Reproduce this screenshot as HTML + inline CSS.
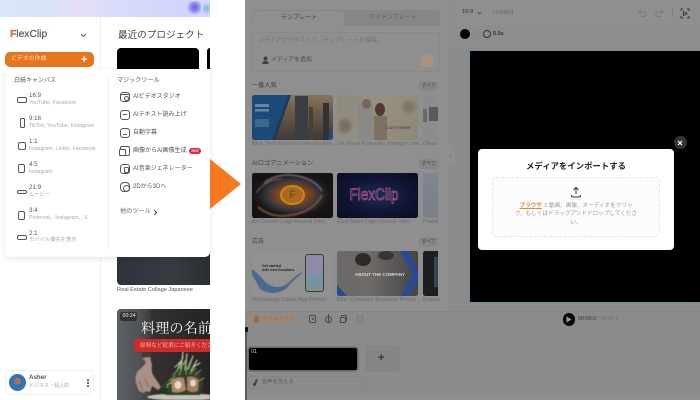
<!DOCTYPE html>
<html lang="ja"><head><meta charset="utf-8"><style>
html,body{margin:0;padding:0;width:700px;height:400px;overflow:hidden;background:#fff}
#w{position:relative;width:700px;height:400px;overflow:hidden;font-family:"Liberation Sans","Noto Sans CJK JP",sans-serif;filter:blur(.3px)}
.a{position:absolute}
.t{position:absolute;white-space:nowrap;line-height:1}
.lab{font-size:6.2px;color:#555}
.sub{font-size:5.3px;color:#aaa}
.mt{font-size:6px;color:#555;left:133px}
.r{position:absolute;border:1.2px solid #555;box-sizing:border-box;border-radius:2px}
.m{position:absolute;left:120px;width:10px;height:10px;border:1.1px solid #555;box-sizing:border-box;border-radius:3px}
.cap{font-size:5.6px;color:#6a6a6a}
.sec{font-size:6.2px;color:#3c3c3c}
.all{position:absolute;left:419px;width:19px;height:10px;border-radius:3px;background:#878787;font-size:5px;color:#444;line-height:10px;text-align:center}
.c{position:absolute;width:81px;height:45px;border-radius:2.5px;overflow:hidden}
</style></head><body><div id="w">

<!-- LEFT PANEL -->
<div class="a" style="left:0;top:0;width:210px;height:17px;background:linear-gradient(90deg,#dbe6f8 0,#d8e2f8 50px,#e6dff7 80px,#d8dbfa 120px,#d2d3fb 190px,#d2d8fa 210px)"></div>
<div class="a" style="left:187px;top:1px;width:14px;height:14px;background:radial-gradient(circle at 55% 45%,#6a62e0 0,#8f86ea 35%,rgba(210,205,250,0) 72%)"></div>
<div class="a" style="left:203px;top:1px;width:7px;height:15px;background:radial-gradient(circle,#86b4ea 0,rgba(210,215,250,0) 75%)"></div>
<div class="a" style="left:100px;top:17px;width:1px;height:383px;background:#f0f0f0"></div>

<div class="t" style="left:10px;top:30px;font-size:10.3px;color:#555;-webkit-text-stroke:.2px #555"><span style="color:#ee7a22;font-weight:700">F</span>lexClip</div>
<svg class="a" style="left:80px;top:33px" width="7" height="5" viewBox="0 0 7 5"><path d="M1 1l2.5 2.5L6 1" fill="none" stroke="#555" stroke-width="1"/></svg>

<div class="t" style="left:118px;top:31px;font-size:9.6px;color:#444">最近のプロジェクト</div>
<div class="a" style="left:117px;top:48px;width:82px;height:30px;background:#000;border-radius:4px"></div>
<div class="a" style="left:207px;top:48px;width:3px;height:30px;background:#000;border-radius:3px 0 0 3px"></div>

<div class="a" style="left:5px;top:52px;width:89px;height:15px;background:#e8741c;border-radius:5px"></div>
<div class="t" style="left:11px;top:56.5px;font-size:5.9px;color:#fde3cd">ビデオの作成</div>
<div class="t" style="left:81px;top:55px;font-size:11px;color:#fff;font-weight:700">+</div>

<!-- under dropdown cards -->
<div class="a" style="left:117px;top:250px;width:93px;height:35px;background:linear-gradient(90deg,#2f323a,#3a3c44 60%,#2b2d33);border-radius:0 0 0 4px"></div>
<div class="t" style="left:117px;top:288px;font-size:5.65px;color:#555">Real Estate Collage Japanese</div>

<!-- food card -->
<div class="a" style="left:117px;top:309px;width:93px;height:91px;background:#2c2a2a;border-radius:4px 0 0 0;overflow:hidden">
  <div class="a" style="left:0;top:0;width:34px;height:91px;background:linear-gradient(90deg,#5d6064,#4e5054 70%,#3c3b3c)"></div>
  <div class="a" style="left:34px;top:0;width:59px;height:91px;background:linear-gradient(90deg,#333131,#252323)"></div>
  <svg class="a" style="left:0;top:30px;filter:blur(.6px)" width="93" height="61" viewBox="0 0 93 61">
    <path d="M25 9l7 1 1 8-8 1z" fill="#3e3c3a"/>
    <path d="M25 19l8-1 2 8q-1 6 1 10l8 12-3 3-6-4-2 6-4-1-2 2-5-2-3-8q-2-8 3-13 5-4 7-8z" fill="#a99085"/>
    <path d="M16 42l5 8M22 42l4 9M28 40l4 9" stroke="#6f5d54" stroke-width=".7" fill="none"/>
    <ellipse cx="66" cy="58" rx="36" ry="3.5" fill="#c4c1ba"/>
    <path d="M43 54q-2-7 6-11 5-8 12-11 3-9 9-11 9 3 11 12 6 6 5 15l-3 8H50z" fill="#2f4026"/>
    <g stroke-width="1.1" fill="none" stroke-linecap="round">
      <path d="M60 32l6-14M64 30l2-17M68 31l2-16M71 30l5-13M74 32l6-11M58 28l7-6M76 28l7-4" stroke="#c9d4b8"/>
      <path d="M56 36l7-8M62 36l3-7M69 35l1-7M73 35l5-6M78 36l6-5M52 42l6-5M82 42l5-3" stroke="#7f9a52"/>
      <path d="M50 46l5-3M46 50l5-2M66 26l2-4M62 24l3-3" stroke="#a8c06a"/>
    </g>
    <path d="M54 41q7-4 13-2l2 12q-7 4-14 2z" fill="#b0876a"/>
    <path d="M70 38q7-2 12 3l-1 11q-6 3-11-1z" fill="#a87e62"/>
    <ellipse cx="61" cy="46" rx="3.500" ry="4" fill="#e4d8cc"/>
    <ellipse cx="76" cy="44" rx="3" ry="3.500" fill="#e4d8cc"/>
    <path d="M42 53q4-6 9-4l-1 7z" fill="#1f3320"/>
  </svg>
  <div class="a" style="left:17px;top:30px;width:76px;height:13px;background:#cc2b27;border-radius:2px 0 0 2px"></div>
  <div class="t" style="left:23px;top:33.5px;font-size:5.6px;color:#f6dcd8;font-family:'Noto Serif CJK SC',serif">原料など従業にご紹介ください</div>
  <div class="t" style="left:24px;top:11.5px;font-size:14.2px;color:#f4f4f4;font-family:'Noto Serif CJK JP','Noto Serif CJK SC',serif">料理の名前</div>
  <div class="a" style="left:3px;top:3px;width:17px;height:9px;background:#333;border-radius:2.5px"></div>
  <div class="t" style="left:5.5px;top:5px;font-size:5.3px;color:#e8e8e8">00:24</div>
</div>

<!-- Dropdown -->
<div class="a" style="left:5px;top:69px;width:205px;height:188px;background:#fff;border-radius:5px 0 5px 5px;box-shadow:0 2px 6px rgba(0,0,0,.1)"></div>
<div class="a" style="left:108px;top:77px;width:1px;height:172px;background:#eee"></div>
<div class="t" style="left:14px;top:78px;font-size:6px;color:#555">白紙キャンバス</div>
<div class="t" style="left:117px;top:78px;font-size:6.1px;color:#555">マジックツール</div>

<div class="r" style="left:17px;top:97px;width:10px;height:6px"></div>
<div class="t lab" style="left:29px;top:93px">16:9</div><div class="t sub" style="left:29px;top:100.5px">YouTube, Facebook</div>
<div class="r" style="left:20px;top:118px;width:5px;height:10px;border-radius:1.5px"></div>
<div class="t lab" style="left:29px;top:116px">9:16</div><div class="t sub" style="left:29px;top:123.5px">TikTok, YouTube, Instagram</div>
<div class="r" style="left:18px;top:142px;width:8px;height:8px"></div>
<div class="t lab" style="left:29px;top:139px">1:1</div><div class="t sub" style="left:29px;top:146.5px">Instagram, LinkIn, Facebook</div>
<div class="r" style="left:18px;top:164px;width:7px;height:9px"></div>
<div class="t lab" style="left:29px;top:162px">4:5</div><div class="t sub" style="left:29px;top:169.5px">Instagram</div>
<div class="r" style="left:17px;top:190px;width:10px;height:4px"></div>
<div class="t lab" style="left:29px;top:185px">21:9</div><div class="t sub" style="left:29px;top:192.5px">ムービー</div>
<div class="r" style="left:18px;top:211px;width:7px;height:9px"></div>
<div class="t lab" style="left:29px;top:208px">3:4</div><div class="t sub" style="left:29px;top:215.5px">Pinterest、Instagram、X</div>
<div class="r" style="left:17px;top:235px;width:10px;height:5px"></div>
<div class="t lab" style="left:29px;top:231px">2:1</div><div class="t sub" style="left:29px;top:238px">モバイル優先を表示</div>

<div class="m" style="top:92px"><div class="a" style="left:2.5px;top:2.5px;width:3px;height:3px;border:1px solid #555;border-radius:50%"></div><div class="a" style="left:0;top:1px;width:8px;height:.8px;background:#555"></div></div>
<div class="t mt" style="top:94px">AIビデオスタジオ</div>
<div class="m" style="top:110px"><div class="a" style="left:2px;top:3.2px;width:4px;height:1px;background:#555"></div></div>
<div class="t mt" style="top:112px">AIテキスト読み上げ</div>
<div class="m" style="top:128px"><div class="a" style="left:2px;top:5px;width:4px;height:1px;background:#555"></div></div>
<div class="t mt" style="top:130px">自動字幕</div>
<div class="m" style="top:146px;border-radius:2px"><div class="a" style="left:-2px;top:2px;width:5px;height:5px;border:1px solid #555;background:#fff;border-radius:1px"></div></div>
<div class="t mt" style="top:148px">画像からAI画像生成</div>
<div class="a" style="left:189px;top:148px;width:12px;height:6px;background:#e0284a;border-radius:3px"></div>
<div class="t" style="left:191.5px;top:149.5px;font-size:3.4px;color:#fff;font-weight:700">HOT</div>
<div class="m" style="top:164px"><div class="a" style="left:2.5px;top:1.5px;width:3px;height:4px;border:1px solid #555;border-radius:1px"></div></div>
<div class="t mt" style="top:166px">AI音楽ジェネレーター</div>
<div class="m" style="top:182px;border-radius:4px"><div class="a" style="left:1.5px;top:1.5px;width:5px;height:5px;border:1px solid #555;border-radius:50%"></div></div>
<div class="t mt" style="top:184px">2Dから3Dへ</div>
<div class="t" style="left:120px;top:209px;font-size:6.2px;color:#666">他のツール</div>
<svg class="a" style="left:153px;top:208.5px" width="5" height="7" viewBox="0 0 5 7"><path d="M1.2 1l2.400 2.500L1.200 6" fill="none" stroke="#444" stroke-width="1"/></svg>

<!-- user -->
<div class="a" style="left:5px;top:370px;width:89px;height:25px;border:1px solid #f0f0f0;box-sizing:border-box;border-radius:5px;background:#fff"></div>
<div class="a" style="left:9px;top:374px;width:17px;height:17px;border-radius:50%;background:radial-gradient(circle at 50% 42%,#b86a50 0,#b86a50 24%,#2c74b4 28%,#2f78b4 100%)"></div>
<div class="t" style="left:29px;top:375px;font-size:6.2px;font-weight:700;color:#555">Asher</div>
<div class="t" style="left:29px;top:384px;font-size:5px;color:#aaa">ビジネス・個人的</div>
<div class="a" style="left:87px;top:379px;width:1.6px;height:1.6px;background:#555;border-radius:50%;box-shadow:0 3px 0 #555,0 6px 0 #555"></div>

<!-- Arrow -->
<svg class="a" style="left:210px;top:159px" width="32" height="50" viewBox="0 0 32 50"><path d="M0 0L31 25L0 50z" fill="#f7791f"/></svg>

<!-- RIGHT SIDE -->
<div class="a" style="left:245px;top:0;width:455px;height:400px;background:#8b8b8b"></div>
<div class="a" style="left:245px;top:0;width:203px;height:311px;background:#8f8f8f"></div>
<div class="a" style="left:245px;top:311px;width:455px;height:1px;background:#858585"></div>
<div class="a" style="left:449px;top:26px;width:251px;height:22px;background:#8d8d8d"></div>
<div class="a" style="left:449px;top:0;width:251px;height:26px;background:#8f8f8f"></div>
<div class="a" style="left:245px;top:398px;width:455px;height:2px;background:#909090"></div>

<!-- tabs -->
<div class="a" style="left:252px;top:10px;width:188px;height:16px;background:#868686;border-radius:4px"></div>
<div class="a" style="left:253px;top:11px;width:91px;height:15px;background:#8f8f8f;border-radius:4px"></div>
<div class="t" style="left:281px;top:15px;font-size:6.1px;color:#454545">テンプレート</div>
<div class="t" style="left:369px;top:15px;font-size:6px;color:#606060">マイテンプレート</div>
<!-- search -->
<div class="a" style="left:252px;top:32px;width:188px;height:40px;border:1px solid #888;box-sizing:border-box;border-radius:3px"></div>
<div class="t" style="left:258px;top:38px;font-size:6px;color:#727272">メディアかテキストで、テンプレートを探索。</div>
<svg class="a" style="left:262px;top:56px" width="7" height="9" viewBox="0 0 7 9"><path d="M3.5 .5a2 2 0 0 1 0 4 2 2 0 0 1 0-4zM.5 8V6l2-1h2l2 1v2z" fill="#3e3e3e"/></svg>
<div class="t" style="left:271px;top:57.5px;font-size:5.9px;color:#4e4e4e">メディアを追加</div>
<div class="a" style="left:421px;top:55px;width:12px;height:12px;background:#a9917f;border-radius:3px"></div>

<!-- section 1 -->
<div class="t sec" style="left:252px;top:83px">一番人気</div><div class="all" style="top:81px">すべて</div>
<div class="c" style="left:252px;top:95px">
  <div class="a" style="left:0;top:0;width:100%;height:100%;background:linear-gradient(180deg,#86745f 0,#6f5c4a 35%,#3e3936 100%)"></div>
  <div class="a" style="left:43px;top:1px;width:13px;height:44px;background:#3a3d41"></div>
  <div class="a" style="left:57px;top:12px;width:4px;height:33px;background:#4a3f36"></div>
  <div class="a" style="left:71px;top:8px;width:6px;height:37px;background:#2f3337"></div>
  <svg class="a" style="left:0;top:0" width="81" height="45"><path d="M0 0H36L20 45H0z" fill="#1c4a78"/><path d="M36 0L20 45h3L39 0z" fill="#173a60"/><path d="M76 45L81 30V45z" fill="#1f4f7d"/></svg>
  <div class="a" style="left:3px;top:9px;width:14px;height:14px;background:linear-gradient(180deg,#7c95aa 0 20%,transparent 20% 35%,#7c95aa 35% 55%,transparent 55%);opacity:.8"></div>
  <div class="a" style="left:3px;top:24px;width:14px;height:8px;background:#3f6789"></div>
</div>
<div class="c" style="left:337px;top:95px;background:linear-gradient(120deg,#8e8a80,#95907f 50%,#8d8779)">
  <div class="a" style="left:21px;top:7px;width:15px;height:38px;background:#898a88;border-radius:6px 6px 0 0;filter:blur(.5px)"></div>
  <div class="a" style="left:25px;top:4px;width:9px;height:10px;background:#7a6759;border-radius:50%"></div>
  <div class="a" style="left:38px;top:8px;width:10px;height:13px;background:#4f3a2e;border-radius:50%"></div>
  <div class="a" style="left:37px;top:21px;width:13px;height:24px;background:#807062"></div>
  <div class="a" style="left:2px;top:24px;width:12px;height:14px;background:#78705f;border-radius:50%;filter:blur(1.5px)"></div>
  <div class="a" style="left:66px;top:6px;width:12px;height:12px;background:#7c7464;border-radius:50%;filter:blur(1.5px)"></div>
  <div class="t" style="left:49px;top:31px;font-size:4.2px;color:#4e3a2e">Love Forever</div>
</div>
<div class="c" style="left:423px;top:95px;width:15px;background:#8c8c8c;border-radius:2.5px 0 0 2.5px">
  <div class="a" style="left:0;top:14px;width:4px;height:13px;background:#6b6a63"></div>
  <div class="a" style="left:6px;top:12px;width:9px;height:14px;background:#585b58"></div>
</div>
<div class="t cap" style="left:252px;top:142px">Blue Tech Business Introduction ...</div>
<div class="t cap" style="left:337px;top:142px">Ink Floral Romantic Vintage Love...</div>
<div class="t cap" style="left:423px;top:142px">Clean</div>

<!-- section 2 -->
<div class="t sec" style="left:252px;top:161px">AIロゴアニメーション</div><div class="all" style="top:159px">すべて</div>
<div class="c" style="left:252px;top:173px;background:#14110f">
  <div class="a" style="left:0;top:-8px;width:81px;height:60px;background:radial-gradient(ellipse 42px 24px at 50% 50%,#a8662a 0,#7a4520 38%,#34363f 62%,#1a1819 84%,#141212 100%)"></div>
  <svg class="a" style="left:0;top:0;filter:blur(.7px)" width="81" height="45" fill="none"><path d="M6 34q14 12 34 8 22-4 30-20" stroke="#7a5036" stroke-width="2"/><path d="M12 10Q28-2 50 4q14 4 20 14" stroke="#7a6a66" stroke-width="1.5"/><path d="M4 20Q14 6 30 6" stroke="#6a5040" stroke-width="1.5"/></svg>
  <div class="a" style="left:28px;top:12px;width:25px;height:20px;border-radius:50%;background:#aa6a1e;border:2px solid #c88426;box-sizing:border-box"></div>
  <div class="t" style="left:37px;top:17px;font-size:11px;font-weight:700;color:#7f4b16">F</div>
</div>
<div class="c" style="left:337px;top:173px;background:radial-gradient(ellipse at 50% 50%,#1e2a58 0,#0f1534 55%,#090c20 100%)">
  <div class="t" style="left:12.5px;top:15px;font-size:13.6px;color:transparent;-webkit-text-stroke:.6px #b85a8a;transform:scaleY(1.25);transform-origin:0 50%">FlexClip</div>
</div>
<div class="c" style="left:423px;top:173px;width:15px;background:linear-gradient(180deg,#7e8692,#7b8088);border-radius:2.5px 0 0 2.5px"></div>
<div class="t cap" style="left:252px;top:220px">Art Cosmic Logo Reveal Intro</div>
<div class="t cap" style="left:337px;top:220px">Cool Neon Logo Reveal Intro</div>
<div class="t cap" style="left:423px;top:220px">Pastel</div>

<!-- section 3 -->
<div class="t sec" style="left:252px;top:239px;color:#444;font-size:6px">広告</div><div class="all" style="top:237px">すべて</div>
<div class="c" style="left:252px;top:251px;background:#919191">
  <div class="t" style="left:10px;top:14px;font-size:3.6px;font-weight:700;color:#222;line-height:1.1">Get started<br>with new functions</div>
  <svg class="a" style="left:0;top:0" width="81" height="45"><path d="M0 18q8 6 14 14 12 8 22 0 8-8 16-12l-4 4q-8 6-14 14-14 8-26 0Q4 30 0 24z" fill="#4c6790"/></svg>
  <div class="a" style="left:53px;top:3px;width:19px;height:38px;background:linear-gradient(160deg,#8e8ca0,#8f8cab 40%,#6d96a0 70%,#8f8f8f);border:1.5px solid #3a3a3a;box-sizing:border-box;border-radius:3px"></div>
</div>
<div class="c" style="left:337px;top:251px;background:#4e4c4c">
  <div class="a" style="left:0;top:0;width:81px;height:45px;background:linear-gradient(90deg,#6a6868 0,#6e6b68 40%,#5a5858 70%,#444 100%)"></div>
  <div class="a" style="left:18px;top:2px;width:16px;height:13px;background:#2e2a28;border-radius:50%"></div>
  <div class="a" style="left:41px;top:0;width:16px;height:9px;background:#3a332e;border-radius:50%"></div>
  <svg class="a" style="left:0;top:0" width="81" height="45"><path d="M63 0h8l10 20v12L70 45h-6l12-22zM0 34L10 45H0z" fill="#264a96"/></svg>
  <div class="t" style="left:18px;top:22px;font-size:4.5px;font-weight:700;color:#d8d8d8">ABOUT THE COMPANY</div>
</div>
<div class="c" style="left:423px;top:251px;width:15px;background:#1e1e22;border-radius:2.5px 0 0 2.5px">
  <div class="a" style="left:11px;top:6px;width:4px;height:30px;background:#3a4458"></div>
</div>
<div class="t cap" style="left:252px;top:298px">Technology Clean App Promo</div>
<div class="t cap" style="left:337px;top:298px">Blue Company Business Promo ...</div>
<div class="t cap" style="left:423px;top:298px">Busine</div>

<!-- handle -->
<div class="a" style="left:448px;top:144px;width:7px;height:22px;background:#8f8f8f;border-radius:0 3px 3px 0"></div>
<svg class="a" style="left:448px;top:152px" width="5" height="7" viewBox="0 0 5 7"><path d="M3.5 1L1.5 3.500 3.500 6" fill="none" stroke="#7a7a7a" stroke-width=".8"/></svg>

<!-- timeline -->
<div class="a" style="left:250px;top:314px;width:47px;height:10px;background:#968a7e;border-radius:3px"></div>
<div class="t" style="left:262px;top:316.5px;font-size:5.6px;color:#9c6a42">タイムライン</div>
<div class="a" style="left:254px;top:315.5px;width:5px;height:7px;background:#9c6a42;border-radius:2px"></div>
<div class="a" style="left:309px;top:315px;width:7px;height:8px;border:1px solid #4a4a4a;border-radius:1.5px;box-sizing:border-box"></div>
<div class="a" style="left:311.5px;top:318px;width:2px;height:2px;background:#4a4a4a;border-radius:50%"></div>
<div class="a" style="left:325px;top:315.5px;width:7px;height:7px;border:1px solid #4a4a4a;border-radius:50%;box-sizing:border-box"></div>
<div class="a" style="left:328.2px;top:314px;width:1px;height:9px;background:#4a4a4a"></div>
<div class="a" style="left:341px;top:315px;width:6px;height:6px;border:1px solid #4a4a4a;border-radius:1px;box-sizing:border-box"></div>
<div class="a" style="left:340px;top:317px;width:6px;height:6px;border:1px solid #4a4a4a;border-radius:1px;box-sizing:border-box;background:#8b8b8b"></div>
<div class="a" style="left:356.5px;top:316px;width:6px;height:7px;border:1px solid #7a7a7a;border-radius:1px;box-sizing:border-box"></div>

<div class="a" style="left:245px;top:328px;width:1.5px;height:72px;background:#5a5a5a"></div>
<div class="a" style="left:245px;top:327px;width:3px;height:5px;background:#111;border-radius:1px"></div>
<div class="a" style="left:248px;top:347px;width:110px;height:24px;background:#000;border:1px solid #666;box-sizing:border-box;border-radius:3px;outline:.5px solid #777"></div>
<div class="t" style="left:251px;top:350px;font-size:5.5px;color:#ccc">01</div>
<div class="a" style="left:365px;top:345px;width:35px;height:27px;background:#858585;border-radius:4px"></div>
<div class="t" style="left:378px;top:353px;font-size:11px;font-weight:700;color:#333">+</div>
<div class="a" style="left:248px;top:376px;width:119px;height:13px;border:1px solid #858585;box-sizing:border-box;border-radius:3px"></div>
<div class="t" style="left:262px;top:380px;font-size:5.3px;color:#5c5c5c">音声を加える</div>
<div class="a" style="left:255px;top:379px;width:1.5px;height:5px;background:#444;transform:rotate(20deg)"></div>
<div class="a" style="left:252.5px;top:383px;width:3px;height:3px;background:#444;border-radius:50%"></div>

<!-- preview head -->
<div class="t" style="left:462px;top:10px;font-size:5.8px;color:#333">16:9</div>
<svg class="a" style="left:477px;top:11px" width="5" height="4" viewBox="0 0 5 4"><path d="M.7 1l1.800 1.800L4.300 1" fill="none" stroke="#444" stroke-width=".8"/></svg>
<div class="t" style="left:493px;top:10px;font-size:6px;color:#6a6a6a">Untitled</div>
<svg class="a" style="left:637px;top:8px" width="63" height="11" viewBox="0 0 63 11" fill="none" stroke="#777" stroke-width=".9">
  <path d="M4 2L2 4l2 2M2 4h5a2.200 2.200 0 0 1 0 4.500H4"/>
  <path d="M24 2l2 2-2 2M26 4h-5a2.200 2.200 0 0 0 0 4.500h3"/>
  <path d="M35.500 1.500v8" stroke="#7d7d7d"/>
  <path d="M44 3V1h2M50 1h2v2M52 8v2h-2M46 10h-2V8" stroke="#333"/>
  <path d="M46.500 3.500L50 5.500l-3.500 2z" stroke="#333"/>
</svg>
<div class="a" style="left:460px;top:29px;width:10px;height:10px;background:#000;border-radius:50%"></div>
<div class="a" style="left:474px;top:30px;width:1px;height:8px;background:#858585"></div>
<div class="a" style="left:483px;top:30px;width:8px;height:8px;border:1px solid #333;border-radius:50%;box-sizing:border-box"></div>
<div class="t" style="left:493px;top:31.5px;font-size:5.5px;font-weight:700;color:#333">5.0s</div>

<!-- canvas -->
<div class="a" style="left:468.5px;top:50px;width:231.5px;height:253px;background:#000;border:1px solid #6a95a0;border-right:0;box-sizing:border-box"></div>

<!-- modal -->
<div class="a" style="left:478px;top:149px;width:196px;height:101px;background:#fff;border-radius:4px"></div>
<div class="a" style="left:673.5px;top:136px;width:13px;height:13px;background:#333;border-radius:50%"></div>
<svg class="a" style="left:677px;top:139.5px" width="6" height="6" viewBox="0 0 6 6"><path d="M1 1l4 4M5 1L1 5" stroke="#fff" stroke-width="1.2"/></svg>
<div class="t" style="left:478px;width:196px;text-align:center;top:161.5px;font-size:8.4px;font-weight:700;color:#222">メディアをインポートする</div>
<div class="a" style="left:492px;top:177px;width:168px;height:60px;background:#fcfcfc;border:1px dashed #e6e6e6;box-sizing:border-box;border-radius:4px"></div>
<svg class="a" style="left:570px;top:186px" width="12" height="12" viewBox="0 0 12 12" fill="none" stroke="#333" stroke-width="1"><path d="M6 8V1.500M3.500 4L6 1.500 8.500 4"/><path d="M1.500 9v.5q0 1.500 1.500 1.500h6q1.500 0 1.500-1.500V9"/></svg>
<div class="t" style="left:492px;width:168px;text-align:center;top:204.2px;font-size:5.6px;color:#999"><span style="color:#e8873a;font-weight:700;text-decoration:underline">ブラウザ</span> と動画、画像、オーディオをクリッ</div>
<div class="t" style="left:492px;width:168px;text-align:center;top:212.2px;font-size:5.6px;color:#999">ク、もしくはドラッグアンドドロップしてくださ</div>
<div class="t" style="left:492px;width:168px;text-align:center;top:221.2px;font-size:5.6px;color:#999">い。</div>

<!-- play -->
<div class="a" style="left:562.5px;top:313px;width:12.5px;height:12.5px;background:#0a0a0a;border-radius:50%"></div>
<svg class="a" style="left:566px;top:316px" width="6" height="7" viewBox="0 0 6 7"><path d="M.5.500L5.500 3.500.5 6.500z" fill="#9a9a9a"/></svg>
<div class="t" style="left:578px;top:317px;font-size:5.4px;color:#333">00:00.0 <span style="color:#6e6e6e">/ 00:05.0</span></div>

</div></body></html>
